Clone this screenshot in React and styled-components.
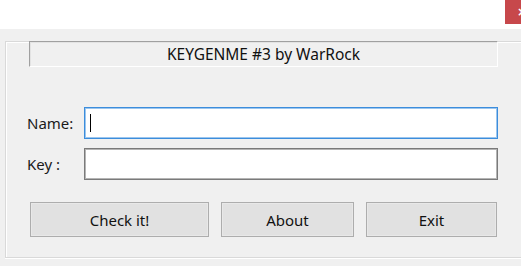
import React from 'react';
import styled, { createGlobalStyle } from 'styled-components';

const GlobalStyle = createGlobalStyle`
  html, body {
    margin: 0;
    padding: 0;
    background: #ffffff;
  }
  body {
    font-family: 'Noto Sans', 'Open Sans', sans-serif;
    color: #1a1a1a;
    overflow: hidden;
  }
`;

const Screen = styled.div`
  width: 521px;
  height: 266px;
  overflow: hidden;
  display: flex;
  flex-direction: column;
`;

const TitleBar = styled.div`
  height: 29px;
  flex: none;
  background: #ffffff;
  display: flex;
  justify-content: flex-end;
  align-items: flex-start;
`;

const CloseButton = styled.div`
  width: 16px;
  height: 24px;
  background: #c7484b;
  color: #ffffff;
  font-family: 'DejaVu Sans', sans-serif;
  font-size: 12px;
  font-weight: bold;
  line-height: 25px;
  padding-left: 12px;
  box-sizing: border-box;
  overflow: hidden;
`;

const Window = styled.div`
  flex: 1;
  background: #f0f0f0;
  padding: 12px 0 8px 5px;
  display: flex;
`;

const Frame = styled.div`
  flex: none;
  width: 560px;
  border-left: 1px solid #d9d9d9;
  border-top: 1px solid #d9d9d9;
  border-bottom: 1px solid #d9d9d9;
  box-shadow: inset 1px 1px 0 #ffffff, 0 1px 0 #ffffff;
  display: flex;
  flex-direction: column;
`;

const Banner = styled.div`
  margin: -1px 0 0 23px;
  width: 469px;
  height: 26px;
  box-sizing: border-box;
  border-top: 1px solid #a0a0a0;
  border-left: 1px solid #a0a0a0;
  border-bottom: 1px solid #ffffff;
  border-right: 1px solid #ffffff;
  box-shadow: inset 1px 1px 0 #e3e3e3;
  display: flex;
  align-items: center;
  justify-content: center;
  font-size: 15.5px;
  color: #111;
`;

const Form = styled.div`
  margin: 40px 0 0 21px;
  display: grid;
  grid-template-columns: 57px 414px;
  grid-auto-rows: 32px;
  row-gap: 9px;
  align-items: center;
`;

const Label = styled.span`
  font-size: 15px;
  color: #1a1a1a;
`;

const Field = styled.div`
  height: 32px;
  box-sizing: border-box;
  background: #ffffff;
  border: 1px solid ${(p) => (p.$focused ? '#3c8ddc' : '#7a7a7a')};
  box-shadow: inset 0 0 0 1px ${(p) => (p.$focused ? '#9cc6ee' : '#b4b4b4')};
  display: flex;
  align-items: center;
  padding-left: 5px;
`;

const Caret = styled.span`
  width: 1px;
  height: 18px;
  background: #000;
`;

const Buttons = styled.div`
  margin: 22px 0 0 24px;
  display: flex;
  gap: 12px;
`;

const Button = styled.div`
  width: ${(p) => p.$w}px;
  height: 35px;
  box-sizing: border-box;
  background: #e1e1e1;
  border: 1px solid #adadad;
  box-shadow: inset 0 0 0 1px #e8e8e8;
  display: flex;
  align-items: center;
  justify-content: center;
  font-size: 15px;
  color: #111;
`;

export default function App() {
  return (
    <>
      <GlobalStyle />
      <Screen>
        <TitleBar>
          <CloseButton>×</CloseButton>
        </TitleBar>
        <Window>
          <Frame>
            <Banner>KEYGENME #3 by WarRock</Banner>
            <Form>
              <Label>Name:</Label>
              <Field $focused>
                <Caret />
              </Field>
              <Label>Key :</Label>
              <Field />
            </Form>
            <Buttons>
              <Button $w={179}>Check it!</Button>
              <Button $w={133}>About</Button>
              <Button $w={131}>Exit</Button>
            </Buttons>
          </Frame>
        </Window>
      </Screen>
    </>
  );
}
